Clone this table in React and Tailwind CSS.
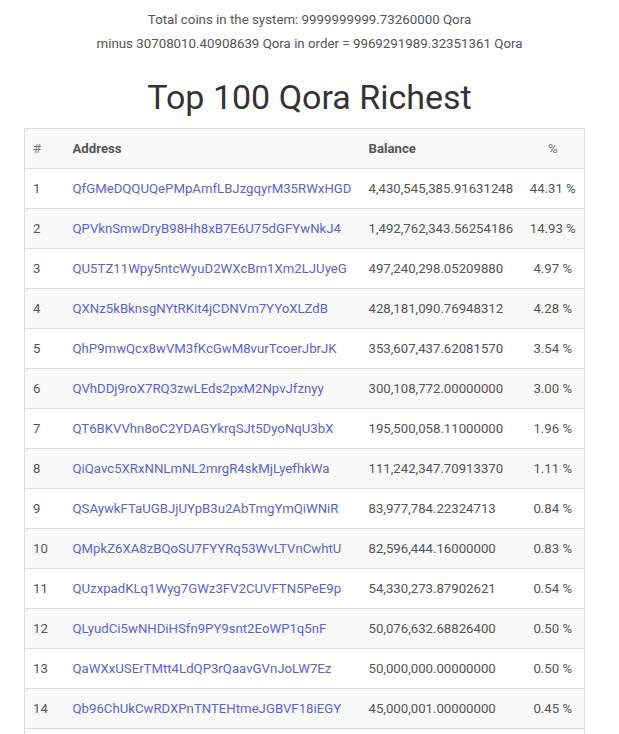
import React from "react";

const rows = [
  ["QfGMeDQQUQePMpAmfLBJzgqyrM35RWxHGD", "4,430,545,385.91631248", "44.31 %"],
  ["QPVknSmwDryB98Hh8xB7E6U75dGFYwNkJ4", "1,492,762,343.56254186", "14.93 %"],
  ["QU5TZ11Wpy5ntcWyuD2WXcBm1Xm2LJUyeG", "497,240,298.05209880", "4.97 %"],
  ["QXNz5kBknsgNYtRKit4jCDNVm7YYoXLZdB", "428,181,090.76948312", "4.28 %"],
  ["QhP9mwQcx8wVM3fKcGwM8vurTcoerJbrJK", "353,607,437.62081570", "3.54 %"],
  ["QVhDDj9roX7RQ3zwLEds2pxM2NpvJfznyy", "300,108,772.00000000", "3.00 %"],
  ["QT6BKVVhn8oC2YDAGYkrqSJt5DyoNqU3bX", "195,500,058.11000000", "1.96 %"],
  ["QiQavc5XRxNNLmNL2mrgR4skMjLyefhkWa", "111,242,347.70913370", "1.11 %"],
  ["QSAywkFTaUGBJjUYpB3u2AbTmgYmQiWNiR", "83,977,784.22324713", "0.84 %"],
  ["QMpkZ6XA8zBQoSU7FYYRq53WvLTVnCwhtU", "82,596,444.16000000", "0.83 %"],
  ["QUzxpadKLq1Wyg7GWz3FV2CUVFTN5PeE9p", "54,330,273.87902621", "0.54 %"],
  ["QLyudCi5wNHDiHSfn9PY9snt2EoWP1q5nF", "50,076,632.68826400", "0.50 %"],
  ["QaWXxUSErTMtt4LdQP3rQaavGVnJoLW7Ez", "50,000,000.00000000", "0.50 %"],
  ["Qb96ChUkCwRDXPnTNTEHtmeJGBVF18iEGY", "45,000,001.00000000", "0.45 %"],
  ["QQfb3UdDPzQjnVoNfE2vUqwUBfDjNbk3bM", "40,000,000.00000000", "0.40 %"],
];

export default function App() {
  return (
    <div className="min-h-screen bg-white font-['Roboto',sans-serif] text-[#555]">
      <div className="pt-2 text-center text-[13.3px] leading-6">
        <p>Total coins in the system: 9999999999.73260000 Qora</p>
        <p>minus 30708010.40908639 Qora in order = 9969291989.32351361 Qora</p>
      </div>
      <h1 className="mt-[21px] mb-[11px] text-center text-[34px] leading-10 text-[#333]">
        Top 100 Qora Richest
      </h1>
      <div className="ml-[24px] w-[561px]">
        <table className="w-full table-fixed border-collapse border border-[#ddd] text-[13.2px]">
          <colgroup>
            <col className="w-[40px]" />
            <col className="w-[296px]" />
            <col className="w-[161px]" />
            <col />
          </colgroup>
          <thead>
            <tr className="h-[40px] bg-[#f9f9f9] border-b border-[#ddd]">
              <th className="px-2 text-left font-normal text-[#777]">#</th>
              <th className="px-2 text-left font-bold">Address</th>
              <th className="px-2 text-left font-bold">Balance</th>
              <th className="px-2 text-center font-normal text-[#777]">%</th>
            </tr>
          </thead>
          <tbody>
            {rows.map((row, index) => (
              <tr
                key={index}
                className={`h-[40px] border-b border-[#ddd] ${
                  index % 2 === 1 ? "bg-[#f9f9f9]" : "bg-white"
                }`}
              >
                <td className="px-2">{index + 1}</td>
                <td className="px-2 whitespace-nowrap">
                  <a href="#" className="text-[#5c62d3]">
                    {row[0]}
                  </a>
                </td>
                <td className="px-2 whitespace-nowrap">{row[1]}</td>
                <td className="px-2 text-center whitespace-nowrap">{row[2]}</td>
              </tr>
            ))}
          </tbody>
        </table>
      </div>
    </div>
  );
}
